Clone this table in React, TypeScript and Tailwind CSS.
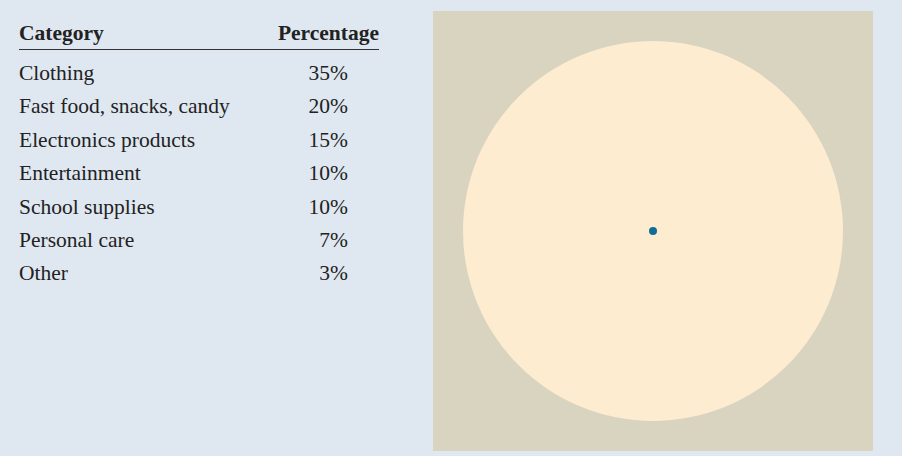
const rows = [
  ['Clothing', '35%'],
  ['Fast food, snacks, candy', '20%'],
  ['Electronics products', '15%'],
  ['Entertainment', '10%'],
  ['School supplies', '10%'],
  ['Personal care', '7%'],
  ['Other', '3%'],
];

export default function App() {
  return (
    <div className="w-[902px] h-[456px] bg-[#dfe8f1] flex font-['Liberation_Serif',serif] text-[#222] overflow-hidden">
      {/* table */}
      <div className="w-[433px] pl-[19px] pt-[20px]">
        <div className="w-[360px]">
          <div className="flex justify-between items-end h-[30px] border-b border-[#333] text-[21.5px] font-bold leading-none pb-[5px]">
            <span>Category</span>
            <span>Percentage</span>
          </div>
          <div className="pt-[7px]">
            {rows.map(([name, pct]) => (
              <div key={name} className="flex h-[33.4px] items-center text-[21.5px] leading-none">
                <span className="flex-1">{name}</span>
                <span className="w-[60px] text-right mr-[31px]">{pct}</span>
              </div>
            ))}
          </div>
        </div>
      </div>

      {/* chart panel */}
      <div className="mt-[11px] w-[440px] h-[440px] bg-[#d8d4c0] flex items-center justify-center">
        <div className="w-[380px] h-[380px] rounded-full bg-[#fdecd0] flex items-center justify-center">
          <div className="w-[8px] h-[8px] rounded-full bg-[#0f6d98]" />
        </div>
      </div>
    </div>
  );
}
